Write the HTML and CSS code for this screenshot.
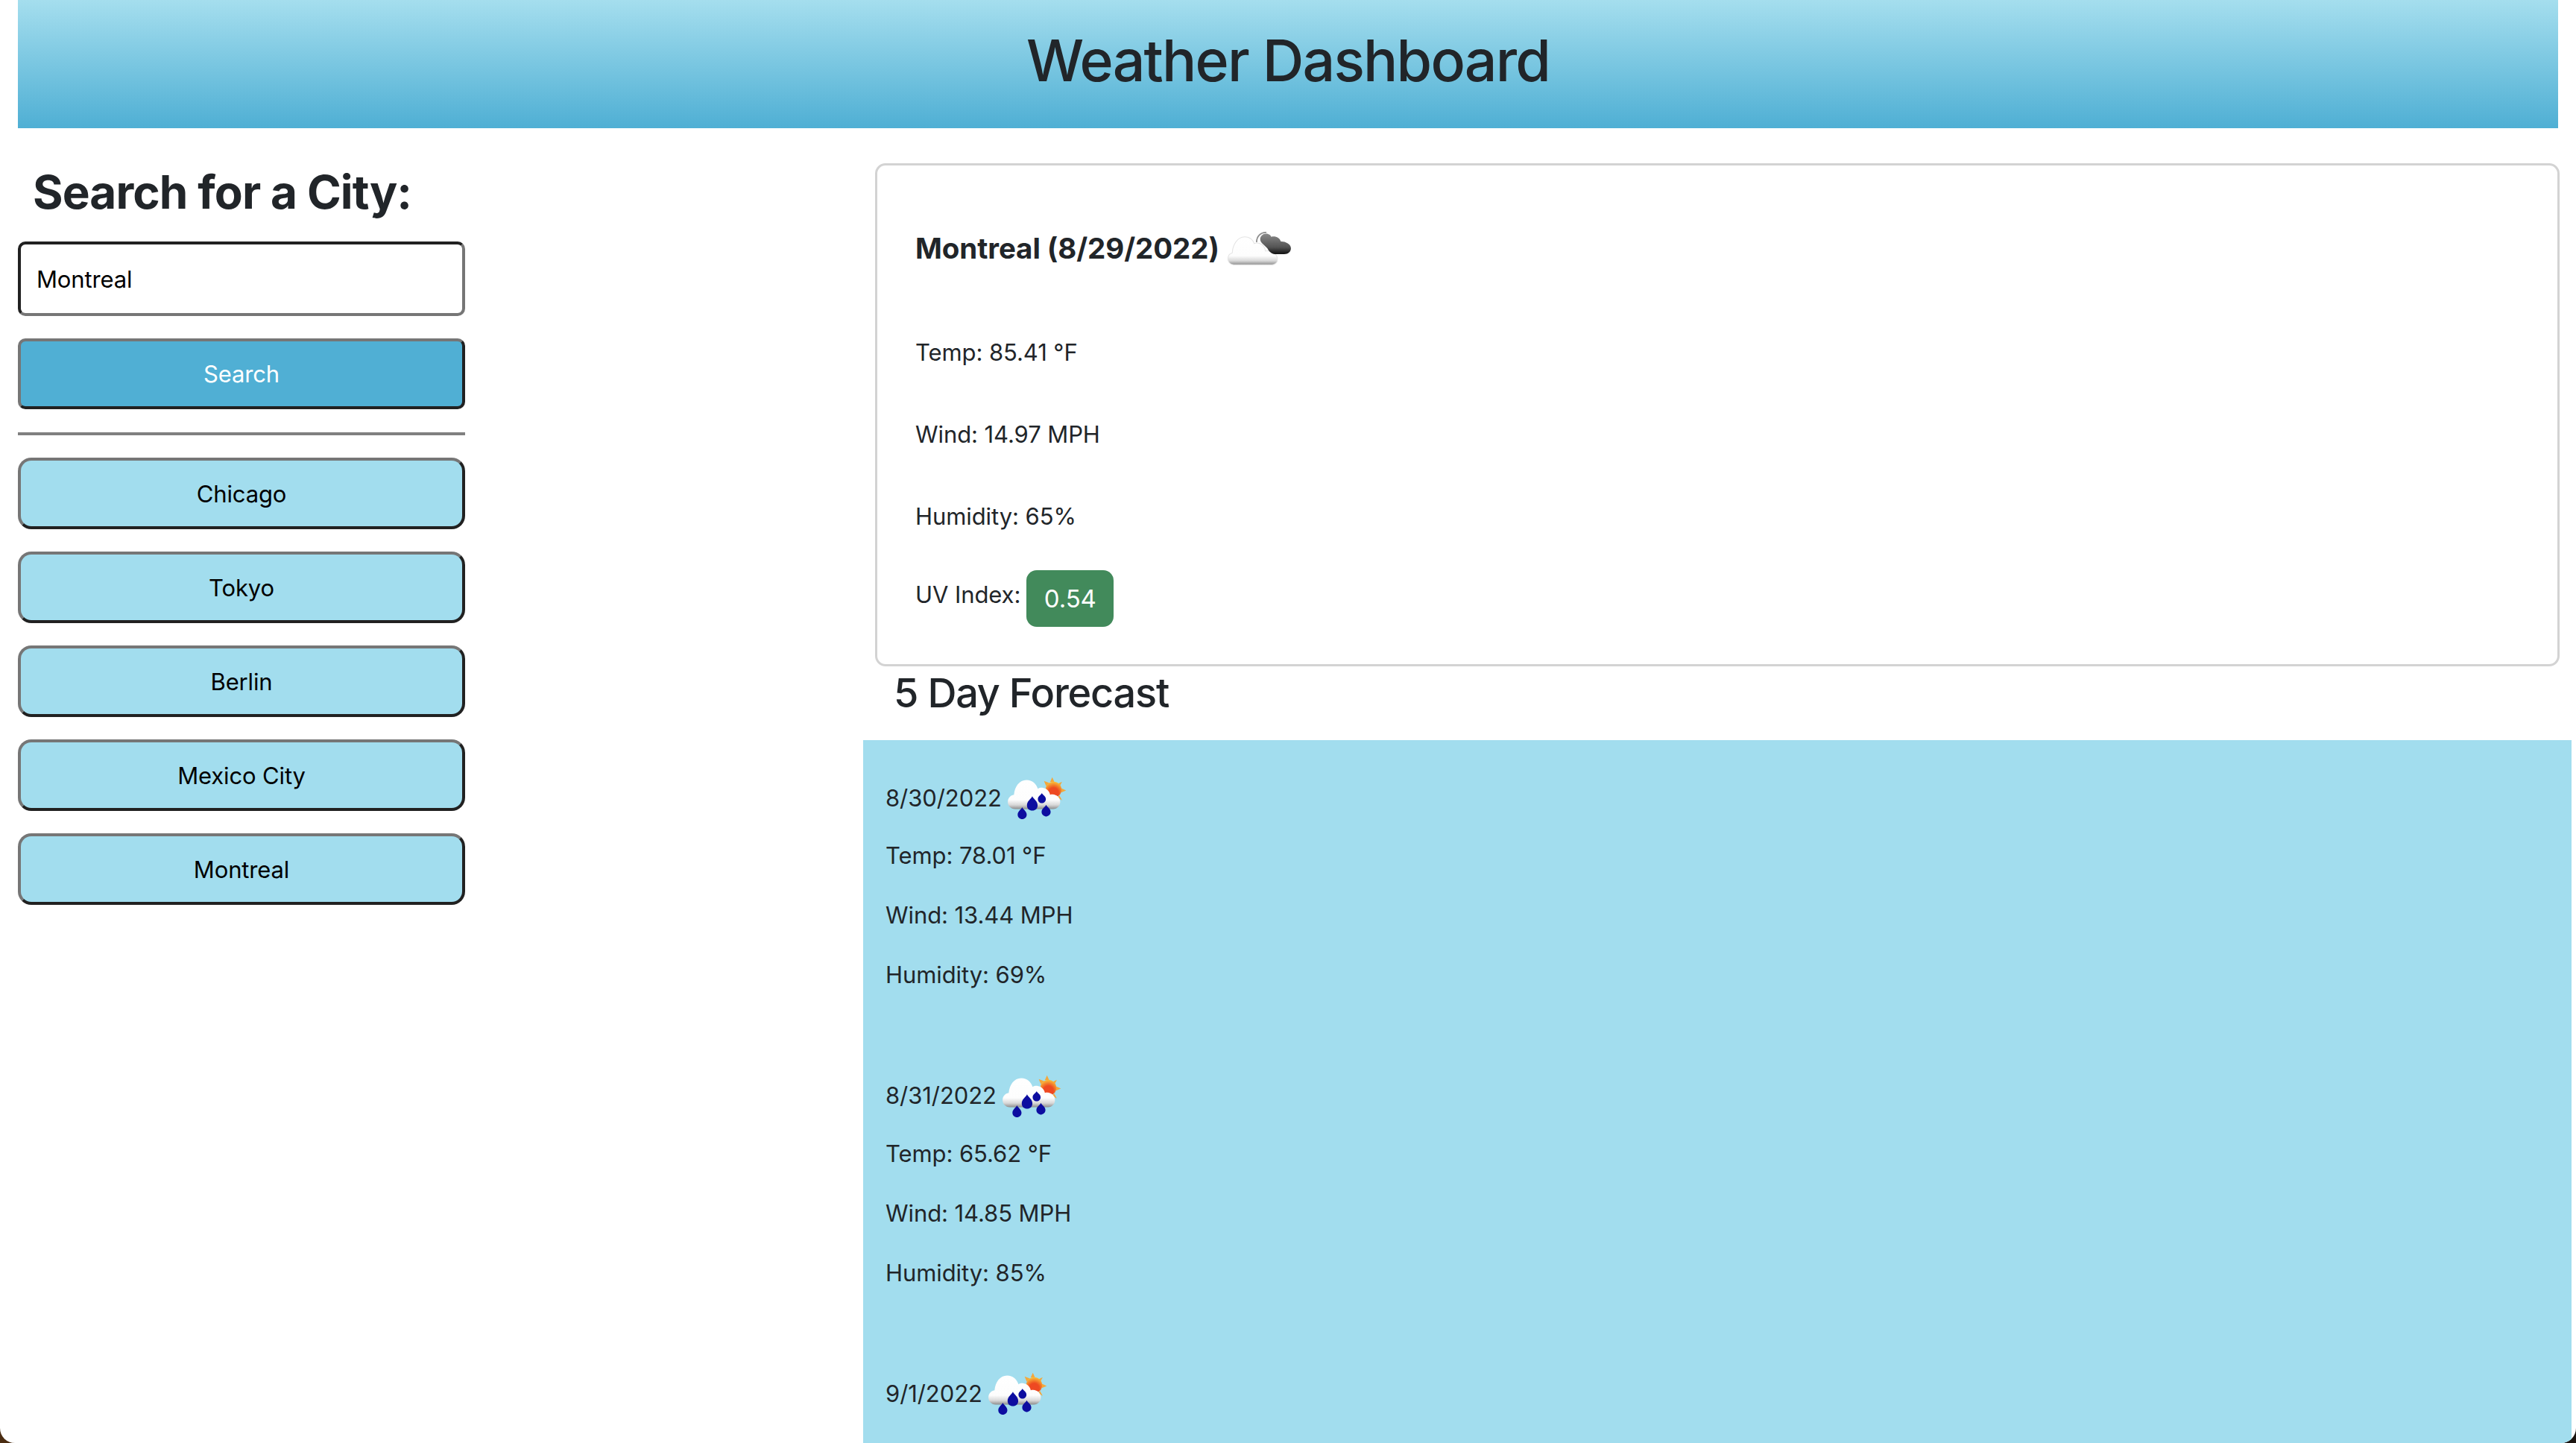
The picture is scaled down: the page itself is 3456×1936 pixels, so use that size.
FILE: index.html
```html
<!DOCTYPE html>
<html lang="en">
<head>
<meta charset="UTF-8">
<meta name="viewport" content="width=device-width, initial-scale=1.0">
<title>Weather Dashboard</title>
<link rel="stylesheet" href="styles.css">
</head>
<body>
    <svg class="icon-defs" width="0" height="0">
        <defs>
            <linearGradient id="white-cloud" x1="0" y1="0" x2="0" y2="1">
                <stop offset="0" stop-color="#ffffff"/>
                <stop offset="0.68" stop-color="#fdfdfd"/>
                <stop offset="0.86" stop-color="#d8d8d8"/>
                <stop offset="1" stop-color="#8e8e8e"/>
            </linearGradient>
            <linearGradient id="dark-cloud" x1="0" y1="0" x2="0" y2="1">
                <stop offset="0" stop-color="#8a8a8a"/>
                <stop offset="0.65" stop-color="#555555"/>
                <stop offset="1" stop-color="#111111"/>
            </linearGradient>
            <radialGradient id="sun" cx="0.5" cy="0.7" r="0.7">
                <stop offset="0.45" stop-color="#ee4a20"/>
                <stop offset="1" stop-color="#f9c23c"/>
            </radialGradient>
            <filter id="soft" x="-10%" y="-10%" width="120%" height="120%">
                <feGaussianBlur stdDeviation="1.6"/>
            </filter>
            <symbol id="rain-sun" viewBox="60 65 240 185">
                <g filter="url(#soft)">
                    <path d="M238 78l8 18h-16zM290 128l-18 8v-16zM207 92l20 8-12 12zM275 95l-10 20-10-10zM275 165l-18-10 8-8z" fill="#f2a83e"/>
                    <circle cx="243" cy="125" r="30" fill="url(#sun)"/>
                    <path d="M98 198c-16 0-27-12-27-27 0-14 10-25 23-27 3-30 20-55 47-55 23 0 37 15 43 33 6-4 12-5 19-4 14 2 25 13 27 26 3-1 6-1 9-1 16 1 29 12 29 28 0 15-11 27-26 27z" fill="url(#white-cloud)"/>
                    <path d="M125 191c4 9 17 15 17 28 0 10-8 17-17 17s-17-7-17-17c0-13 13-19 17-28z" fill="#0a0fa0"/>
                    <path d="M163 150c5 11 20 18 20 34 0 12-9 20-20 20s-20-8-20-20c0-16 15-23 20-34z" fill="#0a0fa0"/>
                    <path d="M215 182c4 9 17 14 17 27 0 10-8 17-17 17s-17-7-17-17c0-13 13-18 17-27z" fill="#0a0fa0"/>
                    <path d="M199 138c3 7 15 12 15 23 0 8-7 15-15 15s-15-7-15-15c0-11 12-16 15-23z" fill="#0a0fa0"/>
                </g>
            </symbol>
            <symbol id="dark-sky" viewBox="135 80 270 150">
                <g filter="url(#soft)">
                    <path d="M170 219c-14 0-23-11-23-23 0-11 7-20 17-23 1-32 21-62 48-62 18 0 31 10 37 26 7-3 15-3 22 0 13 5 20 16 21 29 25-4 47 12 47 32 0 12-9 21-22 21z" fill="url(#white-cloud)" stroke="#e4e4e4" stroke-width="3"/>
                    <path d="M286 142c-8-7-14-12-14-22 0-14 14-24 27-21 8 2 13 6 16 12 16-4 32 3 37 18 16-1 39 9 39 26 0 14-11 23-26 23h-36c-13-1-23-9-29-22z" fill="url(#dark-cloud)"/>
                    <path d="M258 132c0-24 17-40 38-38" fill="none" stroke="#8e8e8e" stroke-width="5"/>
                </g>
            </symbol>
        </defs>
    </svg>

    <div class="page">
        <header class="top-bar">
            <h1>Weather Dashboard</h1>
        </header>

        <main class="content">
            <aside class="search-col">
                <h2>Search for a City:</h2>
                <input type="text" class="city-input" value="Montreal">
                <button class="btn btn-search">Search</button>
                <hr class="divider">
                <div class="history">
                    <button class="btn btn-city">Chicago</button>
                    <button class="btn btn-city">Tokyo</button>
                    <button class="btn btn-city">Berlin</button>
                    <button class="btn btn-city">Mexico City</button>
                    <button class="btn btn-city">Montreal</button>
                </div>
            </aside>

            <section class="weather-col">
                <div class="today-card">
                    <div class="today-title">
                        <h3>Montreal (8/29/2022)</h3>
                        <svg class="icon-today"><use href="#dark-sky"/></svg>
                    </div>
                    <p class="today-line first">Temp: 85.41 °F</p>
                    <p class="today-line">Wind: 14.97 MPH</p>
                    <p class="today-line">Humidity: 65%</p>
                    <div class="uv-row">
                        <span class="uv-label">UV Index:</span>
                        <span class="uv-badge">0.54</span>
                    </div>
                </div>

                <h4 class="forecast-title">5 Day Forecast</h4>

                <div class="forecast">
                    <div class="day">
                        <div class="day-head">
                            <span>8/30/2022</span>
                            <svg class="icon-day"><use href="#rain-sun"/></svg>
                        </div>
                        <p>Temp: 78.01 °F</p>
                        <p>Wind: 13.44 MPH</p>
                        <p>Humidity: 69%</p>
                    </div>
                    <div class="day">
                        <div class="day-head">
                            <span>8/31/2022</span>
                            <svg class="icon-day"><use href="#rain-sun"/></svg>
                        </div>
                        <p>Temp: 65.62 °F</p>
                        <p>Wind: 14.85 MPH</p>
                        <p>Humidity: 85%</p>
                    </div>
                    <div class="day">
                        <div class="day-head">
                            <span>9/1/2022</span>
                            <svg class="icon-day"><use href="#rain-sun"/></svg>
                        </div>
                    </div>
                </div>
            </section>
        </main>
    </div>
</body>
</html>
```

FILE: styles.css
```css
html, body{
    margin: 0;
    height: 100%;
    overflow: hidden;
}
body{
    background: linear-gradient(to right, #4a2d12, #1c1410);
    font-family: "Inter", "Liberation Sans", sans-serif;
    font-size: 31px;
    line-height: 46.5px;
    letter-spacing: -0.08px;
    color: #212529;
}
.icon-defs{
    position: absolute;
}
.page{
    height: 1936px;
    background: #ffffff;
    border-radius: 0 0 20px 20px;
    overflow: hidden;
}

/* header */
.top-bar{
    box-sizing: border-box;
    height: 172px;
    margin: 0 24px;
    padding-bottom: 10px;
    display: flex;
    align-items: center;
    justify-content: center;
    background: linear-gradient(to bottom, #a5deee, #4fafd4);
}
.top-bar h1{
    margin: 0;
    font-size: 77px;
    font-weight: 500;
    line-height: 1.2;
    letter-spacing: -1.8px;
}

/* layout */
.content{
    display: flex;
    padding: 0 6px 0 24px;
}
.search-col{
    width: 600px;
    flex-shrink: 0;
}
.weather-col{
    flex: 1;
    margin-left: 534px;
}

/* left column */
.search-col h2{
    margin: 48px 0 28px 20px;
    font-size: 62px;
    font-weight: 700;
    line-height: 76px;
    letter-spacing: -0.9px;
}
.city-input{
    display: block;
    box-sizing: border-box;
    width: 600px;
    height: 100px;
    padding: 0 21px;
    border: 4px solid;
    border-color: #212121 #767676 #767676 #212121;
    border-radius: 10px;
    outline: none;
    font-family: inherit;
    font-size: 31px;
    letter-spacing: -0.15px;
    color: #000000;
    background: #ffffff;
}
.btn{
    display: block;
    box-sizing: border-box;
    width: 600px;
    border: 4px solid;
    border-color: #767676 #212121 #212121 #767676;
    font-family: inherit;
    font-size: 31px;
    letter-spacing: -0.15px;
    padding: 0;
}
.btn-search{
    height: 95px;
    margin-top: 30px;
    border-radius: 10px;
    background: #50afd4;
    color: #ffffff;
}
.divider{
    height: 4px;
    margin: 31px 0 30px;
    border: 0;
    background: #808080;
}
.history{
    display: flex;
    flex-direction: column;
    gap: 30px;
}
.btn-city{
    height: 96px;
    border-radius: 18px;
    background: #a2ddee;
    color: #000000;
}

/* today */
.today-card{
    box-sizing: border-box;
    height: 675px;
    margin: 47px 16px 0;
    padding: 85px 51px 0;
    border: 3px solid #d3d3d3;
    border-radius: 14px;
}
.today-title{
    display: flex;
    align-items: center;
    gap: 7px;
    height: 52px;
}
.today-title h3{
    margin: 0;
    font-size: 38.5px;
    font-weight: 700;
}
.icon-today{
    width: 94px;
    height: 52px;
}
.today-line{
    margin: 63px 0 0;
}
.today-line.first{
    margin-top: 91px;
}
.today-line:nth-of-type(3){
    margin-top: 64px;
}
.uv-row{
    display: flex;
    align-items: center;
    gap: 8px;
    margin-top: 48px;
}
.uv-label{
    padding-bottom: 8px;
}
.uv-badge{
    width: 117px;
    height: 76px;
    line-height: 76px;
    text-align: center;
    border-radius: 14px;
    background: #428a5b;
    color: #ffffff;
    font-size: 33px;
}

/* forecast */
.forecast-title{
    margin: 0;
    height: 99px;
    padding-left: 41px;
    font-size: 54px;
    font-weight: 500;
    line-height: 72px;
    letter-spacing: -1.2px;
}
.forecast{
    padding: 45px 30px 0;
    height: 943px;
    background: #a2ddee;
}
.day{
    margin-bottom: 106px;
}
.day-head{
    display: flex;
    align-items: center;
    gap: 4px;
    height: 66px;
    margin-bottom: 21px;
}
.icon-day{
    width: 86px;
    height: 66px;
}
.day p{
    margin: 0 0 33.5px;
}
.day p:last-child{
    margin-bottom: 0;
}
```
